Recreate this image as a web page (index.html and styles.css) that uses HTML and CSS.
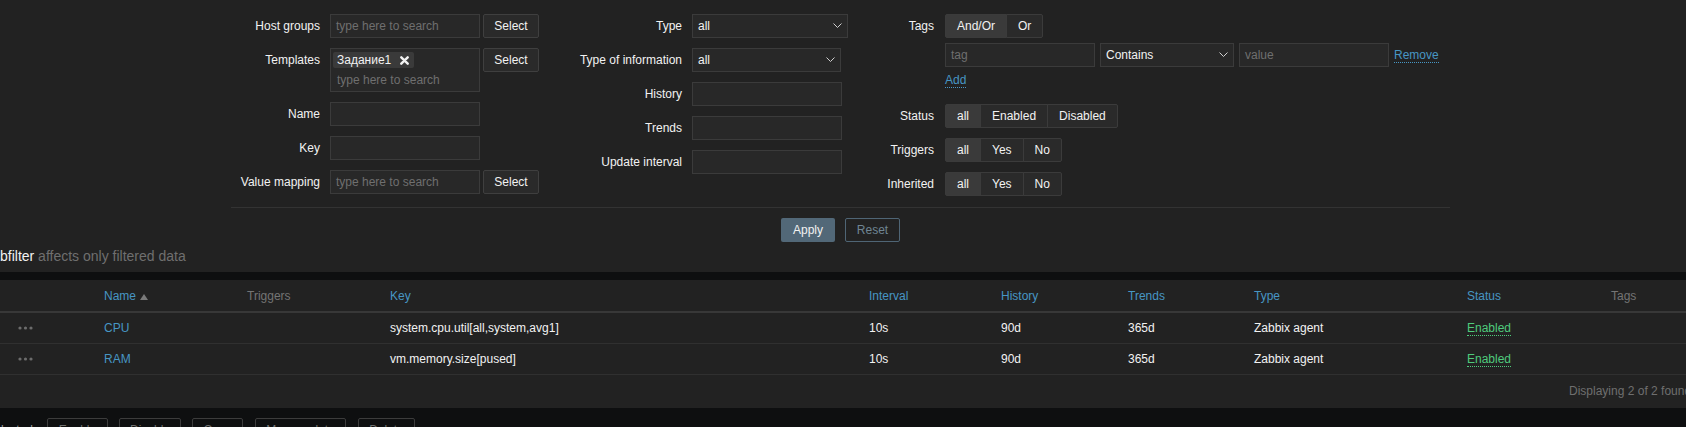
FILE: index.html
```html
<!DOCTYPE html>
<html lang="en">
<head>
<meta charset="utf-8">
<title>Items</title>
<link rel="stylesheet" href="styles.css">
</head>
<body>
<div class="filter">
  <div class="filter-inner">
    <div class="cols">
      <div class="col col1">
        <div class="lbl">Host groups</div>
        <div class="field"><div class="input ph">type here to search</div><div class="btn">Select</div></div>
        <div class="lbl">Templates</div>
        <div class="field">
          <div class="multi">
            <div class="chip">Задание1<svg class="chip-x" width="9" height="9" viewBox="0 0 9 9"><path d="M1.3 1.3 L7.7 7.7 M7.7 1.3 L1.3 7.7" stroke="#f2f2f2" stroke-width="2.4" stroke-linecap="round"/></svg></div>
            <div class="multi-ph ph">type here to search</div>
          </div>
          <div class="btn">Select</div>
        </div>
        <div class="lbl">Name</div>
        <div class="field"><div class="input"></div></div>
        <div class="lbl">Key</div>
        <div class="field"><div class="input"></div></div>
        <div class="lbl">Value mapping</div>
        <div class="field"><div class="input ph">type here to search</div><div class="btn">Select</div></div>
      </div>
      <div class="col col2">
        <div class="lbl">Type</div>
        <div class="field"><div class="select w156"><span>all</span><svg width="9" height="6" viewBox="0 0 9 6"><polyline points="0.5,0.5 4.5,4.5 8.5,0.5" fill="none" stroke="#cfcfcf" stroke-width="1"/></svg></div></div>
        <div class="lbl">Type of information</div>
        <div class="field"><div class="select w149"><span>all</span><svg width="9" height="6" viewBox="0 0 9 6"><polyline points="0.5,0.5 4.5,4.5 8.5,0.5" fill="none" stroke="#cfcfcf" stroke-width="1"/></svg></div></div>
        <div class="lbl">History</div>
        <div class="field"><div class="input"></div></div>
        <div class="lbl">Trends</div>
        <div class="field"><div class="input"></div></div>
        <div class="lbl">Update interval</div>
        <div class="field"><div class="input"></div></div>
      </div>
      <div class="col col3">
        <div class="lbl">Tags</div>
        <div class="tags">
          <div class="seg"><span class="on">And/Or</span><span>Or</span></div>
          <div class="tag-row">
            <div class="input ph">tag</div>
            <div class="select w134"><span>Contains</span><svg width="9" height="6" viewBox="0 0 9 6"><polyline points="0.5,0.5 4.5,4.5 8.5,0.5" fill="none" stroke="#cfcfcf" stroke-width="1"/></svg></div>
            <div class="input ph">value</div>
            <span class="link">Remove</span>
          </div>
          <div class="add-row"><span class="link">Add</span></div>
        </div>
        <div class="lbl">Status</div>
        <div class="field"><div class="seg"><span class="on">all</span><span>Enabled</span><span>Disabled</span></div></div>
        <div class="lbl">Triggers</div>
        <div class="field"><div class="seg"><span class="on">all</span><span>Yes</span><span>No</span></div></div>
        <div class="lbl">Inherited</div>
        <div class="field"><div class="seg"><span class="on">all</span><span>Yes</span><span>No</span></div></div>
      </div>
    </div>
    <div class="divider"></div>
    <div class="actions">
      <div class="apply">Apply</div>
      <div class="reset">Reset</div>
    </div>
  </div>
  <div class="subfilter"><span class="sub-title">bfilter</span> affects only filtered data</div>
</div>

<div class="items">
  <div class="row head">
    <div></div>
    <div class="sort">Name <svg class="arrow" width="8" height="6" viewBox="0 0 8 6"><path d="M4 0 L8 6 L0 6 Z" fill="#7a7a7a"/></svg></div>
    <div class="plain">Triggers</div>
    <div class="sort">Key</div>
    <div class="sort">Interval</div>
    <div class="sort">History</div>
    <div class="sort">Trends</div>
    <div class="sort">Type</div>
    <div class="sort">Status</div>
    <div class="plain">Tags</div>
  </div>
  <div class="row">
    <div class="dots"><svg width="15" height="4" viewBox="0 0 15 4"><circle cx="2" cy="2" r="1.6" fill="#6c6c6c"/><circle cx="7.5" cy="2" r="1.6" fill="#6c6c6c"/><circle cx="13" cy="2" r="1.6" fill="#6c6c6c"/></svg></div>
    <div class="blue">CPU</div>
    <div></div>
    <div>system.cpu.util[all,system,avg1]</div>
    <div>10s</div>
    <div>90d</div>
    <div>365d</div>
    <div>Zabbix agent</div>
    <div><span class="enabled">Enabled</span></div>
    <div></div>
  </div>
  <div class="row">
    <div class="dots"><svg width="15" height="4" viewBox="0 0 15 4"><circle cx="2" cy="2" r="1.6" fill="#6c6c6c"/><circle cx="7.5" cy="2" r="1.6" fill="#6c6c6c"/><circle cx="13" cy="2" r="1.6" fill="#6c6c6c"/></svg></div>
    <div class="blue">RAM</div>
    <div></div>
    <div>vm.memory.size[pused]</div>
    <div>10s</div>
    <div>90d</div>
    <div>365d</div>
    <div>Zabbix agent</div>
    <div><span class="enabled">Enabled</span></div>
    <div></div>
  </div>
  <div class="found">Displaying 2 of 2 found</div>
</div>

<div class="mass">
  <span class="selected">lected</span>
  <span class="mbtn w61">Enable</span>
  <span class="mbtn w62">Disable</span>
  <span class="mbtn w51">Copy</span>
  <span class="mbtn w91">Mass update</span>
  <span class="mbtn w57">Delete</span>
</div>
</body>
</html>
```

FILE: styles.css
```css
* { box-sizing: border-box; }
html, body { margin: 0; padding: 0; }
body {
  background: #0e0f10;
  font-family: "Liberation Sans", Arial, sans-serif;
  font-size: 12px;
  color: #f2f2f2;
  width: 1686px;
  height: 427px;
  overflow: hidden;
}

.filter { background: #222222; height: 272px; padding-top: 14px; }
.filter-inner { margin-left: 231px; width: 1219px; }
.cols { display: flex; height: 183px; }
.col { display: grid; row-gap: 10px; column-gap: 10px; align-content: start; grid-auto-rows: min-content; }
.col1 { width: 339px; grid-template-columns: 89px auto; }
.col2 { width: 310px; grid-template-columns: 112px auto; }
.col3 { grid-template-columns: 54px auto; column-gap: 11px; }
.lbl { text-align: right; line-height: 24px; white-space: nowrap; color: #f2f2f2; }
.field { display: flex; align-items: flex-start; gap: 3px; }

.input {
  width: 150px; height: 24px;
  background: #282828; border: 1px solid #3b3b3b;
  padding: 0 5px; line-height: 22px; white-space: nowrap;
}
.ph { color: #6f6f6f; }

.btn {
  width: 56px; height: 24px; line-height: 22px; text-align: center;
  background: #2a2a2a; border: 1px solid #3f3f3f; border-radius: 2px;
  color: #f2f2f2;
}

.multi {
  width: 150px; height: 44px;
  background: #282828; border: 1px solid #3b3b3b;
  padding: 3px 0 0 2px;
}
.chip {
  display: inline-flex; align-items: center; gap: 9px;
  height: 16px; padding: 0 5px 0 4px;
  background: #3a3a3a; border-radius: 2px; line-height: 16px; color: #f2f2f2;
}
.multi-ph { padding-left: 4px; line-height: 14px; margin-top: 5px; }

.select {
  height: 24px; display: flex; align-items: center; justify-content: space-between;
  background: #282828; border: 1px solid #3b3b3b;
  padding: 0 5px 0 5px; color: #f2f2f2;
}
.w156 { width: 156px; }
.w149 { width: 149px; }
.w134 { width: 134px; }

.tags { display: flex; flex-direction: column; align-items: flex-start; height: 80px; }
.seg { display: inline-flex; height: 24px; }
.seg span {
  height: 24px; line-height: 22px; padding: 0 11px;
  background: #2a2a2a; border: 1px solid #3b3b3b; margin-left: -1px; color: #f2f2f2;
}
.seg span:first-child { margin-left: 0; border-radius: 2px 0 0 2px; }
.seg span:last-child { border-radius: 0 2px 2px 0; }
.seg span.on { background: #3a3a3a; }

.tag-row { display: flex; align-items: center; gap: 5px; margin-top: 5px; }
.link {
  color: #4796c4; line-height: 14px; border-bottom: 1px dotted #4796c4;
  display: inline-block; height: 15px;
}
.add-row { margin-top: 6px; }

.divider { height: 1px; background: #333333; margin-top: 10px; }
.actions { display: flex; justify-content: center; gap: 10px; margin-top: 10px; }
.apply {
  width: 54px; height: 24px; line-height: 24px; text-align: center;
  background: #526878; color: #f2f2f2; border-radius: 2px;
}
.reset {
  width: 55px; height: 24px; line-height: 22px; text-align: center;
  border: 1px solid #4f6575; color: #6f8593; border-radius: 2px;
}
.subfilter { margin-top: 6px; font-size: 14px; line-height: 16px; color: #6f6f6f; white-space: nowrap; }
.sub-title { color: #f2f2f2; }

.items { margin-top: 8px; background: #222222; height: 128px; }
.row {
  display: grid;
  grid-template-columns: 104px 143px 143px 479px 132px 127px 126px 213px 144px 75px;
  align-items: center;
  height: 31px;
  border-bottom: 1px solid #303030;
  white-space: nowrap;
}
.row.head { height: 33px; border-bottom: 2px solid #383838; }
.head .sort { color: #4796c4; }
.head .plain { color: #747474; }
.arrow { margin-left: 1px; }
.dots { padding-left: 18px; }
.dots svg { display: block; }
.blue { color: #4796c4; }
.enabled { color: #4fca7c; border-bottom: 1px dotted #4fca7c; display: inline-block; line-height: 14px; height: 15px; }
.found {
  height: 33px; line-height: 33px; padding-left: 1569px; color: #6f6f6f; white-space: nowrap;
}

.mass { display: flex; align-items: flex-start; padding-top: 10px; white-space: nowrap; }
.selected { color: #9a9a9a; line-height: 24px; margin-left: 1px; width: 46px; }
.mbtn {
  height: 24px; line-height: 22px; text-align: center; margin-right: 11px;
  border: 1px solid #3c3c3c; border-radius: 2px; color: #6f6f6f; background: #0e0f10;
}
.w61 { width: 61px; }
.w62 { width: 62px; }
.w51 { width: 51px; margin-right: 12px; }
.w91 { width: 91px; margin-right: 12px; }
.w57 { width: 57px; }
```
